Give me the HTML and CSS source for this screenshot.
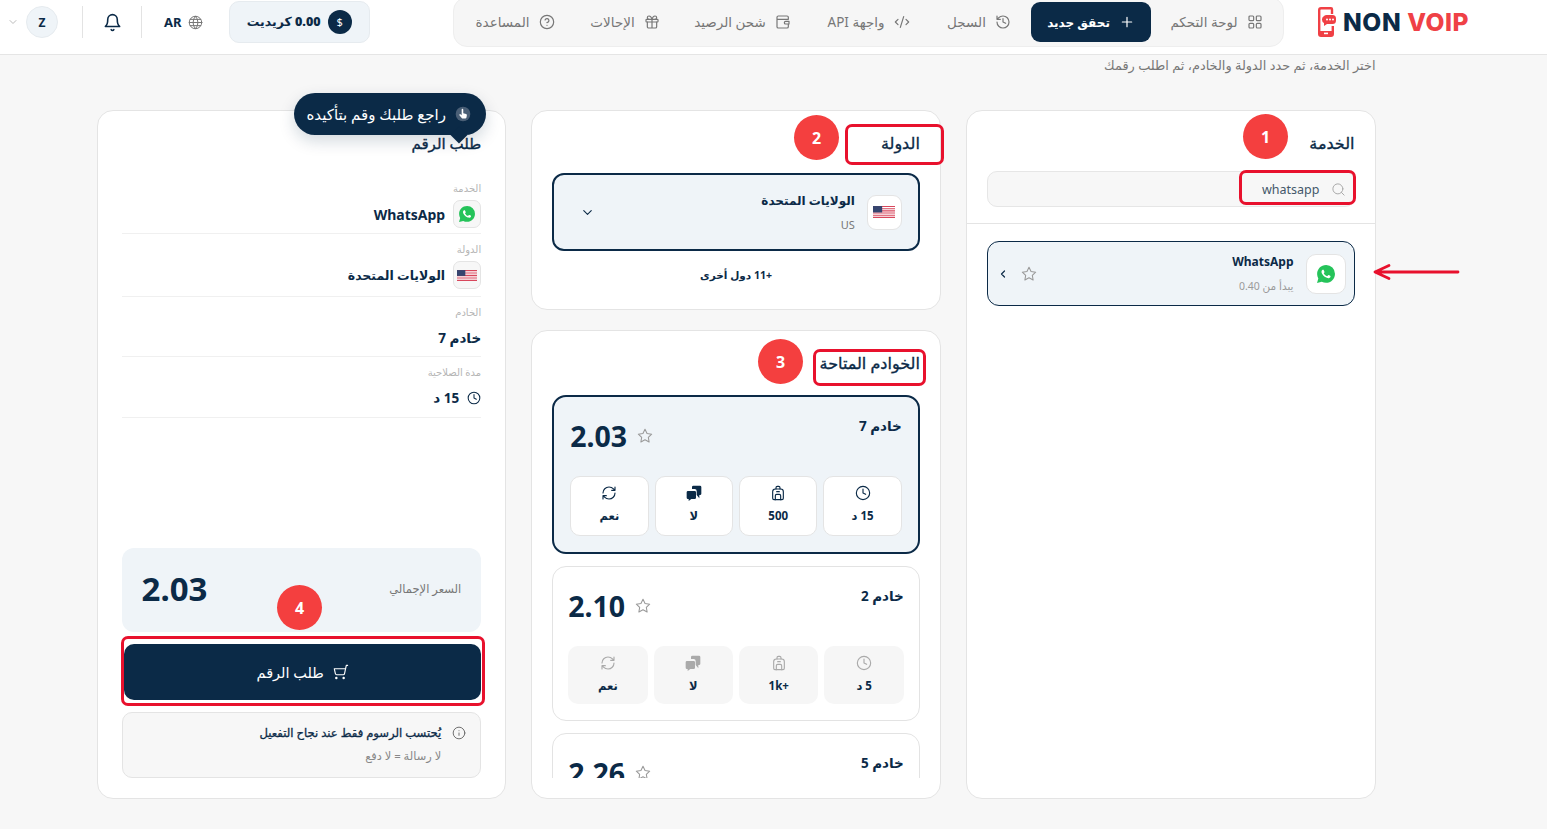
FILE: index.html
```html
<!DOCTYPE html>
<html lang="ar" dir="rtl">
<head>
<meta charset="utf-8">
<title>NON VOIP</title>
<link rel="stylesheet" href="styles.css">
</head>
<body>
<svg class="defs" width="0" height="0" aria-hidden="true">
  <symbol id="wa" viewBox="0 0 24 24">
    <path fill="#25c35a" d="M20.52 3.449A11.815 11.815 0 0012.05 0C5.495 0 .16 5.335.157 11.892c0 2.096.547 4.142 1.588 5.945L.057 24l6.305-1.654a11.882 11.882 0 005.683 1.448h.005c6.554 0 11.89-5.335 11.893-11.893a11.821 11.821 0 00-3.423-8.452z"/>
    <path fill="#fff" d="M17.472 14.382c-.297-.149-1.758-.867-2.03-.967-.273-.099-.471-.148-.67.15-.197.297-.767.966-.94 1.164-.173.199-.347.223-.644.075-.297-.15-1.255-.463-2.39-1.475-.883-.788-1.48-1.761-1.653-2.059-.173-.297-.018-.458.13-.606.134-.133.298-.347.446-.52.149-.174.198-.298.298-.497.099-.198.05-.371-.025-.52-.075-.149-.669-1.612-.916-2.207-.242-.579-.487-.5-.669-.51-.173-.008-.371-.01-.57-.01-.198 0-.52.074-.792.372-.272.297-1.04 1.016-1.04 2.479 0 1.462 1.065 2.875 1.213 3.074.149.198 2.096 3.2 5.077 4.487.709.306 1.262.489 1.694.625.712.227 1.36.195 1.871.118.571-.085 1.758-.719 2.006-1.413.248-.694.248-1.289.173-1.413-.074-.124-.272-.198-.57-.347z"/>
  </symbol>
  <symbol id="flag" viewBox="0 0 24 13">
    <rect width="24" height="13" fill="#fff"/>
    <path fill="#d8475c" d="M0 0h24v1H0zM0 2h24v1H0zM0 4h24v1H0zM0 6h24v1H0zM0 8h24v1H0zM0 10h24v1H0zM0 12h24v1H0z"/>
    <rect width="10" height="7" fill="#36456f"/>
  </symbol>
  <symbol id="star" viewBox="0 0 24 24"><polygon points="12 2 15.09 8.26 22 9.27 17 14.14 18.18 21.02 12 17.77 5.82 21.02 7 14.14 2 9.27 8.91 8.26"/></symbol>
  <symbol id="clock" viewBox="0 0 24 24"><circle cx="12" cy="12" r="10"/><path d="M12 6v6l4 2"/></symbol>
  <symbol id="pack" viewBox="0 0 24 24"><path d="M4 10a4 4 0 0 1 4-4h8a4 4 0 0 1 4 4v10a2 2 0 0 1-2 2H6a2 2 0 0 1-2-2z"/><path d="M8 22v-6a2 2 0 0 1 2-2h4a2 2 0 0 1 2 2v6M9 6V4a2 2 0 0 1 2-2h2a2 2 0 0 1 2 2v2M10 10h4"/></symbol>
  <symbol id="msgs" viewBox="0 0 24 24"><path class="solid" d="M11 1h10a2 2 0 0 1 2 2v10a2 2 0 0 1-2 2h-1v5l-4-5v-6a3 3 0 0 0-3-3H9V3a2 2 0 0 1 2-2z"/><path class="solid" d="M3 9h10a2 2 0 0 1 2 2v8a2 2 0 0 1-2 2H8l-4 3v-3H3a2 2 0 0 1-2-2v-8a2 2 0 0 1 2-2z"/></symbol>
  <symbol id="sync" viewBox="0 0 24 24"><path d="M3 12a9 9 0 0 1 9-9 9.75 9.75 0 0 1 6.74 2.74L21 8M21 3v5h-5M21 12a9 9 0 0 1-9 9 9.75 9.75 0 0 1-6.74-2.74L3 16M8 16H3v5"/></symbol>
</svg>

<div class="page">
  <header class="topbar">
    <a class="logo">
      <svg class="logo-mark" viewBox="0 0 18 30" width="18" height="30"><path fill="none" stroke="#f04045" stroke-width="2.4" d="M14 7V2.2A1 1 0 0 0 13 1.2H3A1.8 1.8 0 0 0 1.2 3v24A1.8 1.8 0 0 0 3 28.8h10a1.8 1.8 0 0 0 1.8-1.8V19"/><path fill="#f04045" d="M1 24h14v5H1z"/><rect x="6" y="25.6" width="4" height="1.6" fill="#fff"/><path fill="#f04045" d="M9 8h5.5a3.5 3.5 0 0 1 3.5 3.5v2a3.5 3.5 0 0 1-3.5 3.5H9l-3 2v-3a4 4 0 0 1 0-7 4 4 0 0 1 3-1z"/><circle cx="9" cy="12.5" r="1" fill="#fff"/><circle cx="12" cy="12.5" r="1" fill="#fff"/><circle cx="15" cy="12.5" r="1" fill="#fff"/></svg>
      <span class="logo-text" dir="ltr"><span class="logo-a">NON</span><span class="logo-b">VOIP</span></span>
    </a>
    <nav class="nav">
      <a class="nav-item nav-w1"><svg class="ico" viewBox="0 0 24 24"><rect x="3" y="3" width="7" height="7" rx="1.5"/><rect x="14" y="3" width="7" height="7" rx="1.5"/><rect x="14" y="14" width="7" height="7" rx="1.5"/><rect x="3" y="14" width="7" height="7" rx="1.5"/></svg><span>لوحة التحكم</span></a>
      <a class="nav-item nav-active"><svg class="ico" viewBox="0 0 24 24"><path d="M5 12h14M12 5v14"/></svg><span>تحقق جديد</span></a>
      <a class="nav-item nav-w2"><svg class="ico" viewBox="0 0 24 24"><path d="M3 12a9 9 0 1 0 9-9 9.75 9.75 0 0 0-6.74 2.74L3 8M3 3v5h5M12 7v5l4 2"/></svg><span>السجل</span></a>
      <a class="nav-item nav-w3"><svg class="ico" viewBox="0 0 24 24"><path d="m18 16 4-4-4-4M6 8l-4 4 4 4M14.5 4l-5 16"/></svg><span>واجهة API</span></a>
      <a class="nav-item nav-w4"><svg class="ico" viewBox="0 0 24 24"><path d="M20 8V5a2 2 0 0 0-2-2H5a2 2 0 0 0-2 2v14a2 2 0 0 0 2 2h13a2 2 0 0 0 2-2v-3M3 8h17M21 11h-5a1.5 1.5 0 0 0 0 4h5z"/></svg><span>شحن الرصيد</span></a>
      <a class="nav-item nav-w5"><svg class="ico" viewBox="0 0 24 24"><rect x="3" y="8" width="18" height="4" rx="1"/><path d="M12 8v13M19 12v7a2 2 0 0 1-2 2H7a2 2 0 0 1-2-2v-7M7.5 8a2.5 2.5 0 0 1 0-5A4.8 8 0 0 1 12 8a4.8 8 0 0 1 4.5-5 2.5 2.5 0 0 1 0 5"/></svg><span>الإحالات</span></a>
      <a class="nav-item nav-w6"><svg class="ico" viewBox="0 0 24 24"><circle cx="12" cy="12" r="10"/><path d="M9.09 9a3 3 0 0 1 5.83 1c0 2-3 3-3 3M12 17h.01"/></svg><span>المساعدة</span></a>
    </nav>
    <div class="tools">
      <div class="credit"><span class="credit-dot">$</span><span class="credit-text"><b>0.00</b> كريديت</span></div>
      <div class="lang"><svg class="ico globe" viewBox="0 0 24 24"><circle cx="12" cy="12" r="10"/><path d="M12 2a14.5 14.5 0 0 0 0 20 14.5 14.5 0 0 0 0-20M2 12h20M3.5 7h17M3.5 17h17"/></svg><span>AR</span></div>
      <span class="vline"></span>
      <svg class="ico bell" viewBox="0 0 24 24"><path d="M6 8a6 6 0 0 1 12 0c0 7 3 9 3 9H3s3-2 3-9M10.3 21a1.94 1.94 0 0 0 3.4 0"/></svg>
      <span class="vline"></span>
      <span class="avatar">Z</span>
      <svg class="ico caret" viewBox="0 0 24 24"><path d="m6 9 6 6 6-6"/></svg>
    </div>
  </header>

  <main class="main">
    <p class="intro">اختر الخدمة، ثم حدد الدولة والخادم، ثم اطلب رقمك</p>
    <div class="columns">
      <section class="card service">
        <div class="service-head">
          <h2 class="title">الخدمة</h2>
          <div class="search">
            <svg class="ico search-ico" viewBox="0 0 24 24"><circle cx="11" cy="11" r="8"/><path d="m21 21-4.3-4.3"/></svg>
            <span>whatsapp</span>
          </div>
        </div>
        <div class="service-body">
          <div class="svc-row">
            <span class="box box-40"><svg class="wa-20"><use href="#wa"/></svg></span>
            <div class="svc-text">
              <b>WhatsApp</b>
              <small>يبدأ من 0.40</small>
            </div>
            <svg class="ico svc-star"><use href="#star"/></svg>
            <svg class="ico svc-chev" viewBox="0 0 24 24"><path d="m15 18-6-6 6-6"/></svg>
          </div>
        </div>
      </section>

      <div class="stack">
        <section class="card country">
          <h2 class="title">الدولة</h2>
          <div class="country-box">
            <span class="box box-35"><svg class="flag-22"><use href="#flag"/></svg></span>
            <div class="country-text"><b>الولايات المتحدة</b><small>US</small></div>
            <svg class="ico country-chev" viewBox="0 0 24 24"><path d="m6 9 6 6 6-6"/></svg>
          </div>
          <p class="more">+11 دول أخرى</p>
        </section>

        <section class="card servers">
          <h2 class="title">الخوادم المتاحة</h2>
          <div class="server-list">
            <article class="server server-on">
              <div class="server-top">
                <span class="server-name">خادم 7</span>
                <div class="server-price"><svg class="ico price-star"><use href="#star"/></svg><b>2.03</b></div>
              </div>
              <div class="tiles">
                <div class="tile"><svg class="ico"><use href="#clock"/></svg><span>15 د</span></div>
                <div class="tile"><svg class="ico"><use href="#pack"/></svg><span>500</span></div>
                <div class="tile"><svg class="ico"><use href="#msgs"/></svg><span>لا</span></div>
                <div class="tile"><svg class="ico"><use href="#sync"/></svg><span>نعم</span></div>
              </div>
            </article>
            <article class="server">
              <div class="server-top">
                <span class="server-name">خادم 2</span>
                <div class="server-price"><svg class="ico price-star"><use href="#star"/></svg><b>2.10</b></div>
              </div>
              <div class="tiles">
                <div class="tile"><svg class="ico"><use href="#clock"/></svg><span>5 د</span></div>
                <div class="tile"><svg class="ico"><use href="#pack"/></svg><bdi dir="ltr">1k+</bdi></div>
                <div class="tile"><svg class="ico"><use href="#msgs"/></svg><span>لا</span></div>
                <div class="tile"><svg class="ico"><use href="#sync"/></svg><span>نعم</span></div>
              </div>
            </article>
            <article class="server">
              <div class="server-top">
                <span class="server-name">خادم 5</span>
                <div class="server-price"><svg class="ico price-star"><use href="#star"/></svg><b>2.26</b></div>
              </div>
            </article>
          </div>
        </section>
      </div>

      <section class="card order">
        <h2 class="title order-title">طلب الرقم</h2>
        <dl class="facts">
          <div class="fact fact-icon">
            <dt>الخدمة</dt>
            <dd><span class="box box-28"><svg class="wa-18"><use href="#wa"/></svg></span><span class="latin">WhatsApp</span></dd>
          </div>
          <div class="fact fact-icon">
            <dt>الدولة</dt>
            <dd><span class="box box-28"><svg class="flag-20"><use href="#flag"/></svg></span>الولايات المتحدة</dd>
          </div>
          <div class="fact">
            <dt>الخادم</dt>
            <dd class="fact-large">خادم 7</dd>
          </div>
          <div class="fact">
            <dt>مدة الصلاحية</dt>
            <dd class="fact-large"><svg class="ico fact-clock"><use href="#clock"/></svg>15 د</dd>
          </div>
        </dl>
        <div class="total"><span>السعر الإجمالي</span><b>2.03</b></div>
        <button class="cta"><svg class="ico cart" viewBox="0 0 24 24"><circle cx="8" cy="21" r="1"/><circle cx="19" cy="21" r="1"/><path d="M2.05 2.05h2l2.66 12.42a2 2 0 0 0 2 1.58h9.78a2 2 0 0 0 1.95-1.57l1.65-7.43H5.12"/></svg><span>طلب الرقم</span></button>
        <div class="note">
          <svg class="ico note-ico" viewBox="0 0 24 24"><circle cx="12" cy="12" r="10"/><path d="M12 16v-4M12 8h.01"/></svg>
          <div class="note-text"><b>يُحتسب الرسوم فقط عند نجاح التفعيل</b><small>لا رسالة = لا دفع</small></div>
        </div>
      </section>
    </div>
  </main>

  <div class="tip">
    <span class="tip-hand"><svg viewBox="0 0 24 24" width="16" height="16"><circle cx="12" cy="12" r="11" fill="#4a5f76"/><path fill="#fff" d="M10 5.5a1.2 1.2 0 0 1 2.4 0V11l4.2 1a1.6 1.6 0 0 1 1.2 1.8l-.6 3.4a2 2 0 0 1-2 1.7h-3.6a2 2 0 0 1-1.6-.8L6.6 14a1.2 1.2 0 0 1 1.8-1.5l1.6 1.3z"/></svg></span>
    <span>راجع طلبك وقم بتأكيده</span>
  </div>

  <span class="step step-1">1</span>
  <span class="step step-2">2</span>
  <span class="step step-3">3</span>
  <span class="step step-4">4</span>
  <span class="mark mark-1"></span>
  <span class="mark mark-2"></span>
  <span class="mark mark-3"></span>
  <span class="mark mark-4"></span>
  <svg class="arrow" viewBox="0 0 88 20" width="88" height="20"><path fill="none" stroke="#e8112d" stroke-width="2.8" stroke-linecap="round" stroke-linejoin="round" d="M86 10H3M17 3.5 3 10l14 6.5"/></svg>
</div>
</body>
</html>
```

FILE: styles.css
```css
* { box-sizing: border-box; }
html, body { margin: 0; padding: 0; }
body {
  font-family: "Noto Sans", "DejaVu Sans", sans-serif;
  color: #0b2a47;
  background: #f7f7f7;
}
.defs { position: absolute; }
.page { position: relative; width: 1547px; height: 829px; overflow: hidden; }
h2, p, dl, dd { margin: 0; }
small { font-size: inherit; }

.ico { width: 16px; height: 16px; fill: none; stroke: currentColor; stroke-width: 2; stroke-linecap: round; stroke-linejoin: round; flex: none; }
.solid { fill: currentColor; stroke: none; }

/* header */
.topbar {
  height: 55px;
  background: #fff;
  border-bottom: 1px solid #e5e5e5;
  display: flex;
  align-items: flex-start;
  padding: 0 78px 0 7px;
}
.logo { display: flex; align-items: center; gap: 7px; height: 44px; }
.logo-mark { order: 2; }
.logo-text { order: 1; font: 800 24.5px/1 "Inter", sans-serif; display: flex; gap: 6px; }
.logo-a { color: #0b2a47; letter-spacing: .6px; }
.logo-b { color: #ef4146; letter-spacing: .5px; }

.nav {
  margin: -3px 34px 0 0;
  height: 50px;
  padding: 4px 5px;
  display: flex;
  gap: 4px;
  background: #f6f6f6;
  border: 1px solid #eee;
  border-radius: 14px;
}
.nav-item {
  height: 40px;
  display: flex;
  align-items: center;
  justify-content: center;
  gap: 9px;
  font-size: 13.5px;
  color: #777;
  white-space: nowrap;
}
.nav-item .ico { stroke-width: 1.8; }
.nav-w1 { width: 123px; }
.nav-w2 { width: 96px; }
.nav-w3 { width: 117px; }
.nav-w4 { width: 127px; }
.nav-w5 { width: 100px; }
.nav-w6 { width: 112px; }
.nav-active { width: 120px; background: #0b2a47; color: #fff; border-radius: 9px; font-size: 12px; font-weight: 700; }

.tools { margin-right: auto; display: flex; align-items: center; height: 44px; }
.credit {
  display: flex; align-items: center; gap: 7px;
  width: 141px; height: 42px; margin-top: -1px;
  padding: 0 17px;
  background: #eff4f8;
  border: 1px solid #e6ebef;
  border-radius: 10px;
  font-size: 12.5px; font-weight: 700;
  white-space: nowrap;
}
.credit-dot { width: 24px; height: 24px; border-radius: 50%; background: #0b2a47; color: #fff; display: grid; place-items: center; font-size: 11px; font-weight: 400; flex: none; }
.lang { display: flex; align-items: center; gap: 6px; margin: 0 26px 0 22px; font-size: 13px; font-weight: 700; }
.globe { color: #777; width: 15px; height: 15px; stroke-width: 1.6; }
.vline { width: 1px; height: 32px; background: #e3e3e3; }
.bell { width: 19px; height: 19px; margin: 0 19px 0 20px; }
.avatar { width: 32px; height: 32px; border-radius: 50%; background: #eff4f8; border: 1px solid #e6ebef; display: grid; place-items: center; font-size: 12px; font-weight: 700; margin: 0 24px 0 7px; }
.caret { width: 12px; height: 12px; color: #bbb; }

/* main */
.main { padding: 0 171.5px 30px 96.5px; }
.intro { height: 55px; padding-top: 2px; line-height: 17px; font-size: 12.9px; color: #777; }
.columns { display: grid; grid-template-columns: repeat(3, 1fr); gap: 25px; height: 689px; }
.card { background: #fff; border: 1px solid #e4e4e4; border-radius: 16px; }
.title { font-size: 16px; line-height: 24px; padding-bottom: 2px; font-weight: 400; -webkit-text-stroke: .35px currentColor; }
.order-title { font-size: 15px; }

/* service */
.service-head { padding: 20px 20px 16px; border-bottom: 1px solid #e4e4e4; }
.service-head .title { margin-bottom: 14px; }
.search { height: 36px; display: flex; align-items: center; gap: 11px; padding: 0 8px; background: #f7f7f7; border: 1px solid #e6e6e6; border-radius: 10px; font-size: 12.5px; color: #44576a; }
.search-ico { width: 15px; height: 15px; color: #aaa; stroke-width: 1.6; }
.service-body { padding: 17px 20px; }
.svc-row { height: 65px; display: flex; align-items: center; padding: 0 8px; background: #eff4f8; border: 1px solid #0b2a47; border-radius: 12px; }
.box { display: grid; place-items: center; background: #fff; border: 1px solid #e4e4e4; flex: none; }
.box-40 { width: 40px; height: 40px; border-radius: 10px; }
.box-35 { width: 35px; height: 35px; border-radius: 9px; }
.box-28 { width: 28px; height: 28px; border-radius: 7px; background: #f7f7f7; }
.wa-20 { width: 18px; height: 18px; }
.wa-18 { width: 16px; height: 16px; }
.flag-22 { width: 22px; height: 12px; }
.flag-20 { width: 20px; height: 11px; }
.svc-text { flex: 1; display: flex; flex-direction: column; gap: 9px; padding-right: 12px; }
.svc-text b { font-size: 12px; line-height: 16px; font-weight: 700; text-align: right; }
.svc-text small { font-size: 10.5px; line-height: 14px; color: #9a9a9a; }
.svc-star { width: 16px; height: 16px; color: #999; stroke-width: 1.6; margin-left: 12px; }
.svc-chev { width: 12px; height: 12px; stroke-width: 2.4; margin-left: 1px; }

/* stack */
.stack { display: flex; flex-direction: column; gap: 20px; min-height: 0; }
.country { height: 200px; padding: 20px 20px 0; }
.country-box { margin-top: 16px; height: 78px; display: flex; align-items: center; padding: 0 16px; background: #eff4f8; border: 2px solid #0b2a47; border-radius: 12px; }
.country-text { flex: 1; display: flex; flex-direction: column; gap: 8px; padding-right: 12px; }
.country-text b { font-size: 12px; line-height: 18px; }
.country-text small { font-size: 11px; line-height: 14px; color: #777; }
.country-chev { width: 15px; height: 15px; margin-left: 10px; stroke-width: 1.8; }
.more { margin-top: 15px; text-align: center; font-size: 10.5px; line-height: 18px; font-weight: 700; }

.servers { flex: 1; min-height: 0; padding: 20px 20px 0; }
.server-list { margin-top: 18px; height: 383px; overflow: hidden; display: flex; flex-direction: column; gap: 12px; }
.server { flex: none; height: 155px; padding: 16px 15px; border: 1px solid #e3e3e3; border-radius: 14px; }
.server-on { height: 159px; padding: 16px; background: #eff4f8; border: 2px solid #0b2a47; }
.server-top { height: 63px; display: flex; justify-content: space-between; align-items: flex-start; }
.server-name { font-size: 13.5px; line-height: 20px; font-weight: 700; margin-top: 3px; }
.server-price { display: flex; align-items: center; gap: 10px; margin-top: 5px; }
.server-price b { font-size: 28.5px; line-height: 36px; font-weight: 700; }
.price-star { color: #999; stroke-width: 1.6; }
.tiles { display: grid; grid-template-columns: repeat(4, 1fr); gap: 6px; }
.tile { height: 58px; padding-top: 9px; border-radius: 10px; background: #f6f6f6; display: flex; flex-direction: column; align-items: center; gap: 7px; font-size: 11.5px; line-height: 15px; font-weight: 700; }
.tile .ico { color: #aaa; stroke-width: 1.7; }
.server-on .tile { height: 60px; padding-top: 8px; background: #fff; border: 1px solid #e4e4e4; }
.server-on .tile .ico { color: #0b2a47; }

/* order */
.order { padding: 20px 24px 20px; display: flex; flex-direction: column; }
.facts { margin-top: 14px; }
.fact { height: 60px; border-bottom: 1px solid #f0f0f0; padding-top: 8px; }
.fact-icon { height: 63px; }
.fact:first-child { padding-top: 10px; }
.fact:last-child { height: 61px; }
.fact dt { font-size: 10px; line-height: 14px; color: #b5b5b5; }
.fact dd { margin-top: 5px; display: flex; align-items: center; gap: 8px; font-size: 12.5px; font-weight: 700; height: 28px; }
.fact .fact-large { font-size: 13.5px; }
.latin { font-size: 14px; }
.fact-clock { width: 14px; height: 14px; stroke-width: 1.8; }
.total { margin-top: auto; height: 84px; display: flex; align-items: center; justify-content: space-between; padding: 0 20px; background: #eff4f8; border-radius: 12px; font-size: 11.5px; color: #777; }
.total span { margin-top: -4px; }
.total b { font-size: 33px; line-height: 40px; color: #0b2a47; margin-top: -2px; }
.cta { margin-top: 12px; height: 56px; display: flex; align-items: center; justify-content: center; gap: 9px; background: #0b2a47; color: #fff; border: 0; border-radius: 10px; font: 400 14.5px "Noto Sans", "DejaVu Sans", sans-serif; width: 357px; }
.cart { transform: scaleX(-1); stroke-width: 1.7; }
.note { margin-top: 12px; height: 66px; display: flex; gap: 11px; padding: 12px 14px; background: #f7f7f7; border: 1px solid #e4e4e4; border-radius: 10px; }
.note-ico { width: 14px; height: 14px; color: #666; stroke-width: 1.6; margin-top: 1px; }
.note-text { display: flex; flex-direction: column; gap: 7px; }
.note-text b { font-size: 11.6px; line-height: 16px; font-weight: 400; -webkit-text-stroke: .3px currentColor; }
.note-text small { font-size: 11.4px; line-height: 16px; color: #888; }

/* overlays */
.tip { position: absolute; left: 294px; top: 93px; width: 192px; height: 42px; padding: 0 15px 0 0; display: flex; align-items: center; gap: 9px; background: #0b2a47; color: #fff; border-radius: 21px; font-size: 15px; white-space: nowrap; box-shadow: 0 6px 16px rgba(11, 42, 71, .18); }
.tip::after { content: ""; position: absolute; left: 159px; bottom: -6px; width: 12px; height: 12px; background: #0b2a47; transform: rotate(45deg); }
.tip-hand { display: grid; place-items: center; flex: none; }
.step { position: absolute; width: 45px; height: 45px; border-radius: 50%; background: #f43f3f; color: #fff; display: grid; place-items: center; font-size: 16px; font-weight: 700; }
.step-1 { left: 1243px; top: 114px; }
.step-2 { left: 794px; top: 115px; }
.step-3 { left: 758px; top: 339px; }
.step-4 { left: 277px; top: 585px; }
.mark { position: absolute; border: 3px solid #e8112d; border-radius: 7px; }
.mark-1 { left: 1239px; top: 170px; width: 117px; height: 35px; }
.mark-2 { left: 845px; top: 124px; width: 99px; height: 41px; }
.mark-3 { left: 813px; top: 349px; width: 113px; height: 37px; }
.mark-4 { left: 121px; top: 636px; width: 364px; height: 70px; }
.arrow { position: absolute; left: 1372px; top: 262px; }
```
